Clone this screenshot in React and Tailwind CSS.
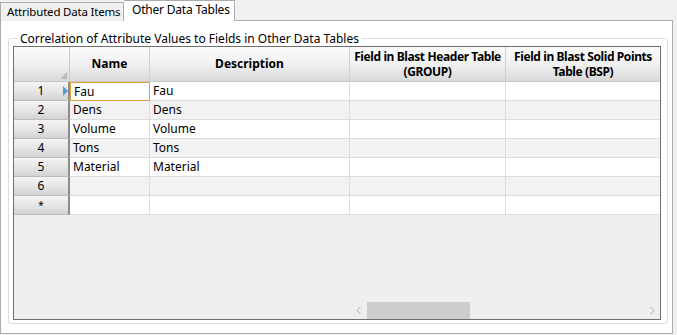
import React from "react";

const rows = [
  { id: "1", name: "Fau", desc: "Fau" },
  { id: "2", name: "Dens", desc: "Dens" },
  { id: "3", name: "Volume", desc: "Volume" },
  { id: "4", name: "Tons", desc: "Tons" },
  { id: "5", name: "Material", desc: "Material" },
  { id: "6", name: "", desc: "" },
  { id: "*", name: "", desc: "" },
];

const headBg = "bg-gradient-to-b from-[#fbfbfb] via-[#f1f1f1] to-[#d9d9d9]";
const rowHeadBg = "bg-gradient-to-b from-[#f4f4f4] via-[#e6e6e6] to-[#d3d3d3]";

const Chevron = ({ dir }) => (
  <svg width="8" height="9" viewBox="0 0 8 9" fill="none">
    <path
      d={dir === "left" ? "M5.5 1L2 4.5L5.5 8" : "M2.5 1L6 4.5L2.5 8"}
      stroke="#a8a8a8"
      strokeWidth="1"
    />
  </svg>
);

const App = () => {
  return (
    <div
      className="w-[677px] h-[335px] bg-[#f0f0f0] flex flex-col text-[12px] text-[#000] overflow-hidden"
      style={{ fontFamily: '"Segoe UI", "Noto Sans", Arial, sans-serif' }}
    >
      {/* Tabs */}
      <div className="flex items-end h-[21px] pr-[5px] relative z-10 whitespace-nowrap">
        <div className="h-[19px] w-[124px] border border-b-0 border-[#acacac] bg-[#f0f0f0] flex items-center pl-[6px] leading-none text-[11.5px] tracking-[-0.2px]">
          Attributed Data Items
        </div>
        <div className="h-[21px] w-[111px] border border-b-0 border-l-0 border-[#acacac] bg-white flex items-center pl-[8px] pb-[2px] leading-none tracking-[-0.2px]">
          Other Data Tables
        </div>
      </div>

      {/* Tab page */}
      <div className="w-[673px] h-[314px] -mt-px border border-[#acacac] bg-white flex flex-col pl-[7px] pr-[4px] pt-[10px] pb-[9px]">
        <fieldset className="flex-1 border border-[#d5dfe5] rounded-[3px] px-[4px] pr-[6px] pb-[3px] flex flex-col min-h-0">
          <legend className="ml-[4px] px-[3px] leading-[15px] h-[15px] whitespace-nowrap">
            Correlation of Attribute Values to Fields in Other Data Tables
          </legend>

          {/* Grid */}
          <div className="w-[648px] h-[274px] border border-[#6e6e6e] bg-[#efefef] flex flex-col">
            {/* Column header */}
            <div className="flex h-[35px] border-b border-[#c8c8c8] whitespace-nowrap">
              <div className={`w-[56px] ${headBg} border-r border-[#c8c8c8] relative`}>
                <div className="absolute right-[2px] bottom-[2px] w-0 h-0 border-l-[7px] border-l-transparent border-b-[7px] border-b-[#b9b9b9]" />
              </div>
              <div className={`w-[80px] ${headBg} border-r border-[#d0d0d0] flex items-center justify-center font-bold`}>
                Name
              </div>
              <div className={`w-[200px] ${headBg} border-r border-[#d0d0d0] flex items-center justify-center font-bold`}>
                Description
              </div>
              <div className={`w-[156px] ${headBg} border-r border-[#d0d0d0] flex flex-col items-center justify-center font-bold leading-[15px] tracking-[-0.4px]`}>
                <span>Field in Blast Header Table</span>
                <span>(GROUP)</span>
              </div>
              <div className={`flex-1 ${headBg} flex flex-col items-center justify-center font-bold leading-[15px] tracking-[-0.4px]`}>
                <span>Field in Blast Solid Points</span>
                <span>Table (BSP)</span>
              </div>
            </div>

            {/* Rows */}
            {rows.map((r, i) => (
              <div
                key={r.id}
                className={`flex h-[19px] ${i % 2 === 1 ? "bg-[#f2f2f2]" : "bg-white"}`}
              >
                <div
                  className={`w-[56px] ${rowHeadBg} border-r-2 border-r-[#8c8c8c] border-b border-b-[#bdbdbd] relative flex items-center justify-center ${
                    r.id === "*" ? "text-[10px]" : ""
                  }`}
                >
                  {r.id}
                  {i === 0 && (
                    <div className="absolute right-[0px] top-[4px] w-0 h-0 border-t-[5px] border-t-transparent border-b-[5px] border-b-transparent border-l-[5px] border-l-[#5a9ad6]" />
                  )}
                </div>
                <div
                  className={`w-[80px] border-r border-b flex items-center pl-[3px] ${
                    i === 0 ? "border border-[#e0a338]" : "border-[#dcdcdc]"
                  }`}
                >
                  {r.name}
                </div>
                <div className="w-[200px] border-r border-b border-[#dcdcdc] flex items-center pl-[3px]">
                  {r.desc}
                </div>
                <div className="w-[156px] border-r border-b border-[#dcdcdc]" />
                <div className="flex-1 border-b border-[#dcdcdc]" />
              </div>
            ))}

            <div className="flex-1" />

            {/* Horizontal scrollbar */}
            <div className="h-[17px] flex">
              <div className="w-[336px]" />
              <div className="w-[17px] flex items-center justify-center">
                <Chevron dir="left" />
              </div>
              <div className="flex-1 flex">
                <div className="w-[103px] h-full bg-[#cdcdcd]" />
              </div>
              <div className="w-[17px] flex items-center justify-center">
                <Chevron dir="right" />
              </div>
            </div>
          </div>
        </fieldset>
      </div>
    </div>
  );
};

export default App;
